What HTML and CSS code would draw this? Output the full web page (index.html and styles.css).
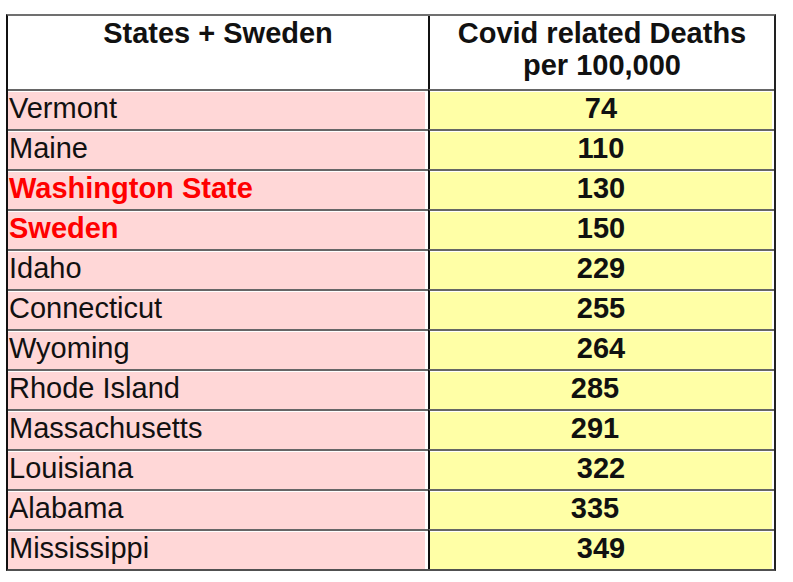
FILE: index.html
```html
<!DOCTYPE html>
<html>
<head>
<meta charset="utf-8">
<link rel="stylesheet" href="styles.css">
</head>
<body>
<div class="sheet">
  <div class="head">States + Sweden</div>
  <div class="head col2">Covid related Deaths<br>per 100,000</div>

  <div class="name">Vermont</div><div class="num">74</div>
  <div class="name">Maine</div><div class="num">110</div>
  <div class="name red">Washington State</div><div class="num">130</div>
  <div class="name red">Sweden</div><div class="num">150</div>
  <div class="name">Idaho</div><div class="num">229</div>
  <div class="name">Connecticut</div><div class="num">255</div>
  <div class="name">Wyoming</div><div class="num">264</div>
  <div class="name">Rhode Island</div><div class="num left">285</div>
  <div class="name">Massachusetts</div><div class="num left">291</div>
  <div class="name">Louisiana</div><div class="num">322</div>
  <div class="name">Alabama</div><div class="num left">335</div>
  <div class="name">Mississippi</div><div class="num">349</div>
</div>
</body>
</html>
```

FILE: styles.css
```css
html, body {
  margin: 0;
  padding: 0;
  background: #ffffff;
}
body {
  font-family: "Liberation Sans", Arial, sans-serif;
  color: #111111;
}
.sheet {
  margin: 14px 0 0 6px;
  width: 770px;
  box-sizing: border-box;
  display: grid;
  grid-template-columns: 420px 346px;
  border-left: 2px solid #111111;
  border-right: 2px solid #222222;
  border-top: 2px solid #707070;
  border-bottom: 2px solid #505050;
}
.head {
  height: 73px;
  box-sizing: border-box;
  padding-top: 1px;
  font-size: 29px;
  font-weight: bold;
  line-height: 32px;
  text-align: center;
  background: #ffffff;
}
.col2 {
  border-left: 2px solid #111111;
}
.name, .num {
  height: 40px;
  box-sizing: border-box;
  border-top: 2px solid #666666;
  font-size: 29px;
  line-height: 34px;
  padding-bottom: 4px;
  white-space: nowrap;
}
.name {
  background: #ffd7d7;
  box-shadow: inset -3px 1px 0 #ffffff;
  padding-left: 1px;
}
.num {
  background: #ffffa6;
  box-shadow: inset -2px 1px 0 #ffffff;
  border-left: 2px solid #111111;
  font-weight: bold;
  text-align: center;
  padding-right: 2px;
}
.num.left {
  padding-right: 14px;
}
.red {
  color: #ff0000;
  font-weight: bold;
}
```
